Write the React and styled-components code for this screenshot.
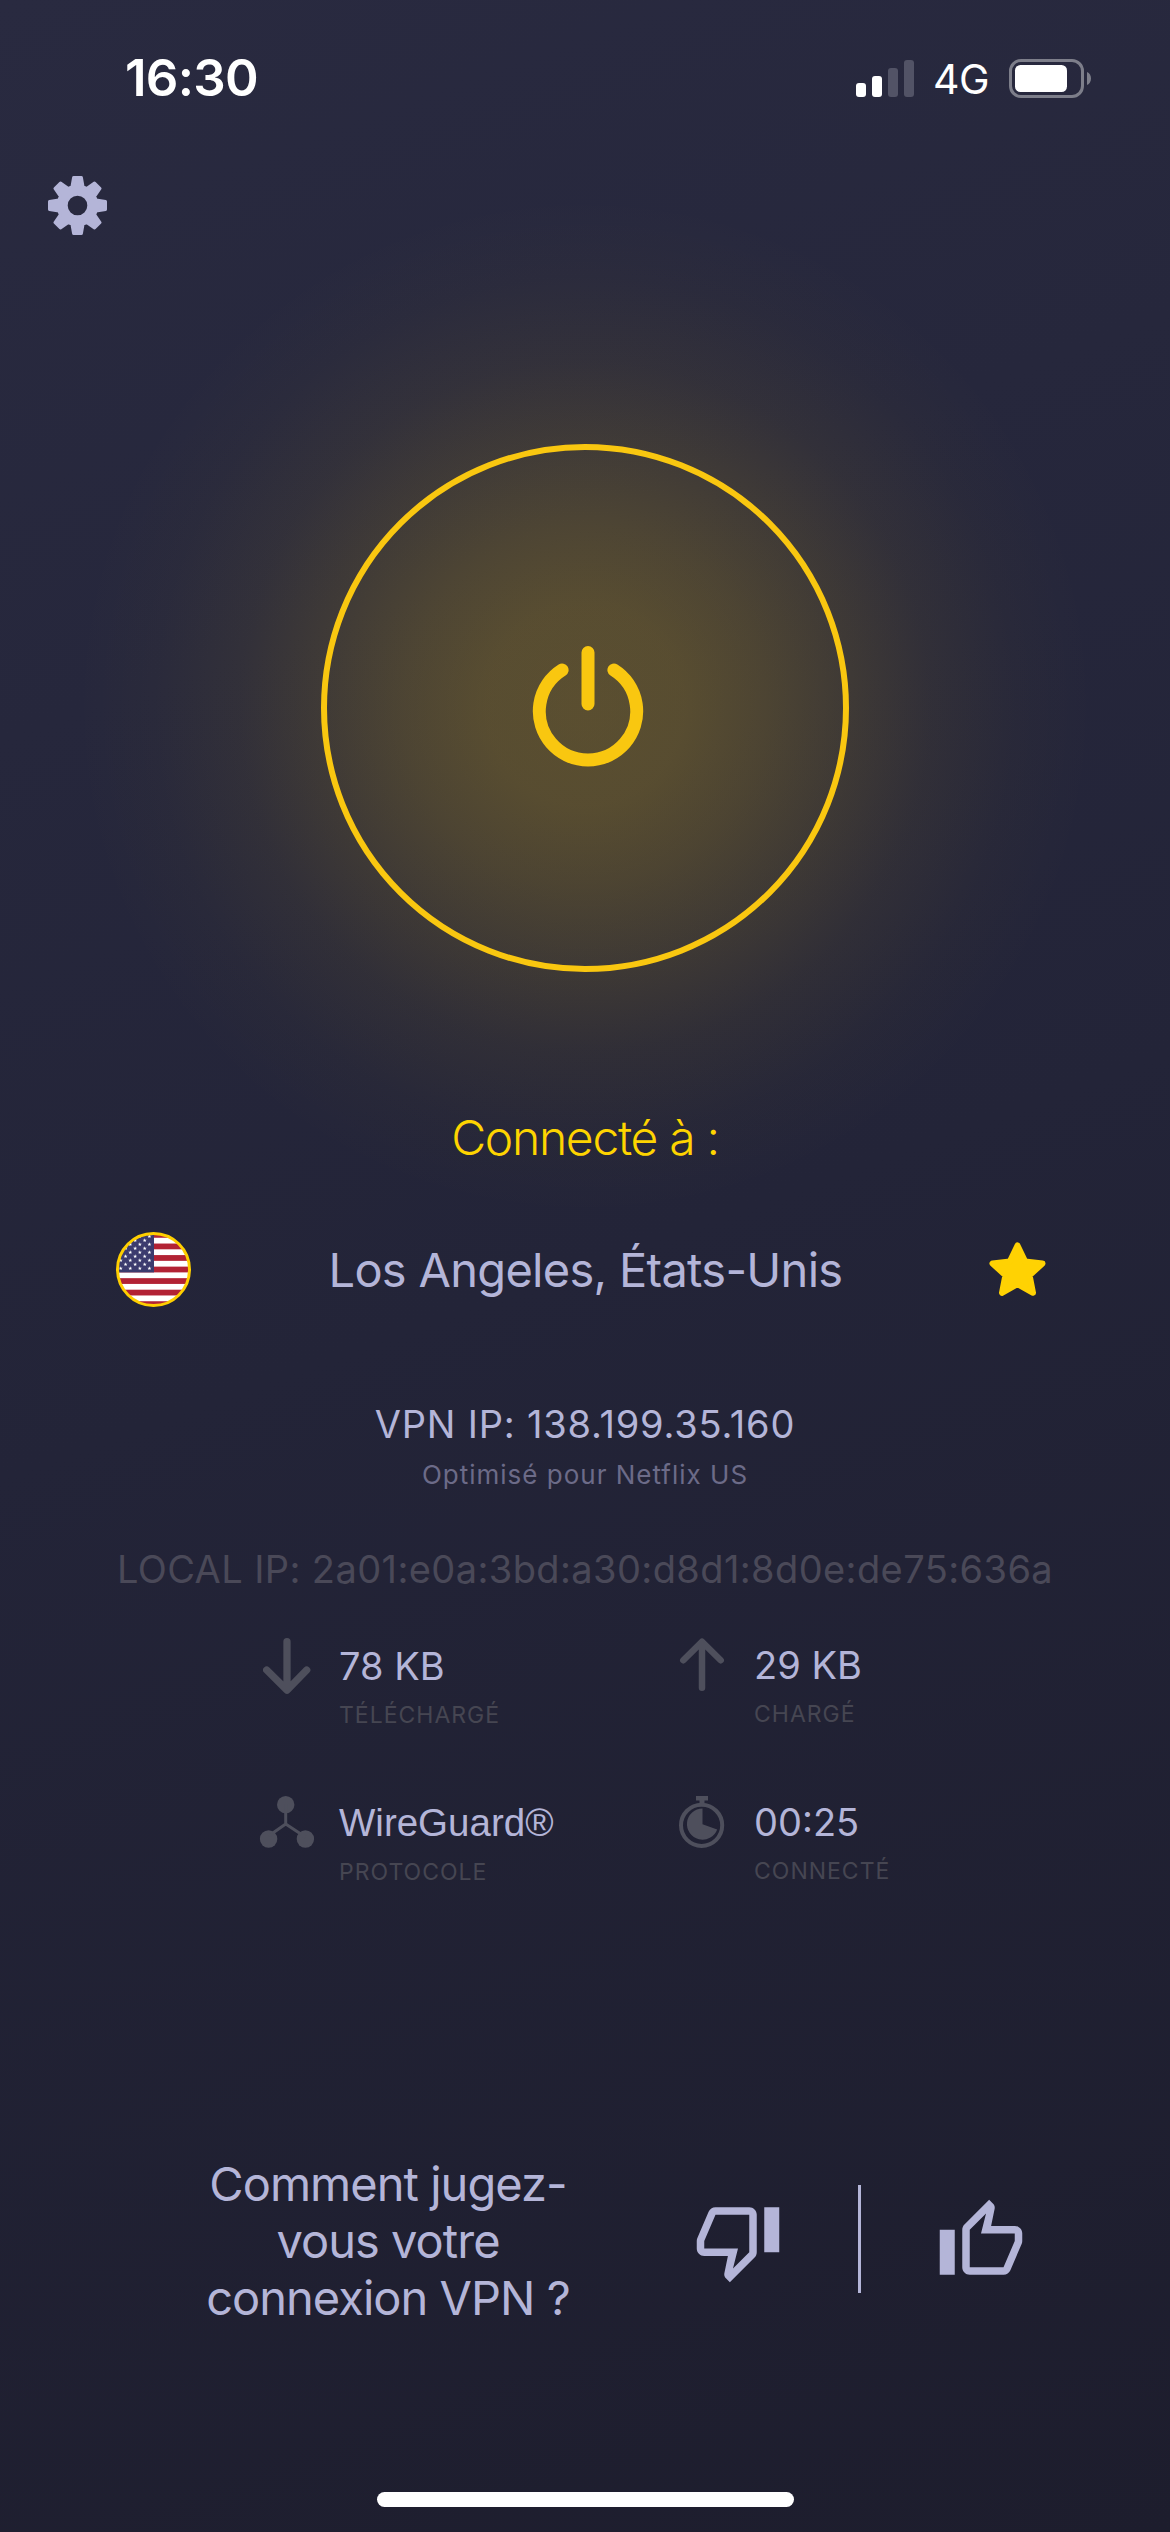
// App.jsx
import React from 'react';
import styled, { createGlobalStyle } from 'styled-components';

const GlobalStyle = createGlobalStyle`
  body {
    margin: 0;
    background: #1d1d2d;
    font-family: Inter, "Liberation Sans", sans-serif;
    -webkit-font-smoothing: antialiased;
  }
`;

const Screen = styled.div`
  display: flex;
  flex-direction: column;
  width: 1170px;
  height: 2532px;
  overflow: hidden;
  box-sizing: border-box;
  color: #b4b5d8;
  background:
    radial-gradient(
      circle at 585px 706px,
      rgba(249, 199, 16, 0.25) 0,
      rgba(249, 199, 16, 0.24) 100px,
      rgba(249, 199, 16, 0.19) 180px,
      rgba(249, 199, 16, 0.12) 264px,
      rgba(249, 199, 16, 0.06) 345px,
      rgba(249, 199, 16, 0.018) 430px,
      rgba(249, 199, 16, 0) 510px
    ),
    linear-gradient(160deg, #292a40 0%, #232438 50%, #1d1d2d 100%);
`;

const StatusBar = styled.div`
  display: flex;
  align-items: center;
  justify-content: space-between;
  height: 156px;
  padding: 0 79px 0 125px;
  color: #fff;
`;

const Time = styled.span`
  font-size: 51px;
  font-weight: 600;
  line-height: 60px;
  letter-spacing: -0.7px;
`;

const StatusIcons = styled.div`
  display: flex;
  align-items: center;
`;

const Network = styled.span`
  width: 95px;
  font-size: 41px;
  line-height: 50px;
  padding-top: 2px;
  padding-left: 19px;
  box-sizing: border-box;
  letter-spacing: -0.5px;
`;

const Signal = styled.div`
  display: flex;
  align-items: flex-end;
  gap: 6px;
  height: 37px;
`;

const SignalBar = styled.span`
  width: 10px;
  height: ${props => props.$height}px;
  border-radius: 3px;
  background: ${props => (props.$active ? '#fff' : '#525366')};
`;

const Header = styled.div`
  display: flex;
  height: 60px;
  padding: 20px 0 0 48px;
`;

const IconButton = styled.button`
  display: flex;
  padding: 0;
  border: none;
  background: none;
  color: inherit;
  cursor: pointer;
`;

const PowerButton = styled(IconButton)`
  align-items: center;
  justify-content: center;
  align-self: center;
  flex-shrink: 0;
  box-sizing: border-box;
  width: 528px;
  height: 528px;
  margin-top: 208px;
  border: 6px solid #f9c710;
  border-radius: 50%;
  color: #f9c710;
`;

const PowerIcon = styled.svg`
  margin: -5px 0 0 5px;
`;

const Status = styled.h1`
  margin: 136px 0 0;
  font-size: 48px;
  font-weight: 300;
  line-height: 60px;
  letter-spacing: -1.3px;
  text-align: center;
  color: #fed400;
`;

const LocationRow = styled.div`
  display: flex;
  align-items: center;
  height: 75px;
  margin-top: 64px;
  padding: 0 115px 0 116px;
`;

const City = styled.span`
  flex: 1;
  font-size: 47px;
  line-height: 60px;
  letter-spacing: -0.7px;
  text-align: center;
  white-space: nowrap;
`;

const Favorite = styled(IconButton)`
  justify-content: center;
  width: 75px;
`;

const AddressBlock = styled.div`
  display: flex;
  flex-direction: column;
  align-items: center;
  margin-top: 92px;
`;

const Address = styled.span`
  font-size: 38px;
  line-height: 50px;
  letter-spacing: 0.8px;
  white-space: nowrap;
`;

const Note = styled.span`
  margin-top: 10px;
  font-size: 26px;
  line-height: 32px;
  letter-spacing: 1px;
  color: #6c6b88;
`;

const LocalAddress = styled(Address)`
  margin-top: 53px;
  letter-spacing: 0.4px;
  color: #4a4958;
`;

const Stats = styled.div`
  display: grid;
  grid-template-columns: 415px 415px;
  grid-auto-rows: 157px;
  margin-top: 44px;
  padding-left: 263px;
`;

const Stat = styled.div`
  display: flex;
  align-items: flex-start;
  color: #4e4f5c;
`;

const StatText = styled.div`
  display: flex;
  flex-direction: column;
  padding: ${props => (props.$raised ? 2 : 3)}px 0 0 28px;
`;

const StatValue = styled.span`
  font-size: 38px;
  line-height: 50px;
  color: #b4b5d8;
`;

const BrandValue = styled(StatValue)`
  font-family: "Liberation Sans", Arial, sans-serif;
  font-size: 38.5px;
`;

const StatLabel = styled.span`
  margin-top: 9px;
  font-size: 23px;
  line-height: 30px;
  letter-spacing: 1px;
  text-transform: uppercase;
  color: #464652;
`;

const Feedback = styled.div`
  display: flex;
  align-items: center;
  height: 171px;
  margin-top: 203px;
  padding-left: 188px;
`;

const Question = styled.p`
  width: 400px;
  margin: 0 105px 0 0;
  font-size: 47px;
  line-height: 57px;
  letter-spacing: -0.97px;
  text-align: center;
`;

const Divider = styled.span`
  width: 3px;
  height: 108px;
  margin: 0 75px;
  background: #b4b5d8;
  transform: translateY(-2px);
`;

const HomeIndicator = styled.div`
  width: 417px;
  height: 15px;
  margin: auto auto 25px;
  border-radius: 8px;
  background: #fff;
`;

const gearPath = () => {
  const points = [];
  for (let i = 0; i < 8; i++) {
    const a = (i * Math.PI) / 4;
    [[-5.6, 18.6], [-3.9, 28], [3.9, 28], [5.6, 18.6]].forEach(([x, r]) => {
      const px = x * Math.cos(a) + r * Math.sin(a);
      const py = x * Math.sin(a) - r * Math.cos(a);
      points.push(`${px.toFixed(2)} ${py.toFixed(2)}`);
    });
  }
  return `M${points.join('L')}ZM11.3 0A11.3 11.3 0 1 0 -11.3 0A11.3 11.3 0 1 0 11.3 0Z`;
};

const Gear = () => (
  <svg width="59" height="59" viewBox="-29.5 -29.5 59 59">
    <path
      d={gearPath()}
      fill="currentColor"
      fillRule="evenodd"
      stroke="currentColor"
      strokeWidth="3"
      strokeLinejoin="round"
    />
  </svg>
);

const Battery = () => (
  <svg width="82" height="39" viewBox="0 0 82 39">
    <rect x="1.5" y="1.5" width="72" height="36" rx="10.5" fill="none" stroke="#7d7e8a" strokeWidth="3" />
    <rect x="6" y="6" width="52" height="27" rx="5.5" fill="#fff" />
    <path d="M78 13c2.6 1 4 3.6 4 6.5s-1.4 5.5-4 6.5z" fill="#7d7e8a" />
  </svg>
);

const Power = () => (
  <PowerIcon width="112" height="122" viewBox="0 0 112 122" fill="none" stroke="currentColor" strokeWidth="13" strokeLinecap="round">
    <path d="M56 7.5V59M30.1 25A48.7 48.7 0 1 0 81.9 25" />
  </PowerIcon>
);

const flagStars = [];
for (let row = 0; row < 9; row++) {
  const start = row % 2 ? 28.7 : 33.4;
  for (let x = start; x > 0; x -= 9.56) {
    flagStars.push([x, 4.4 + row * 4]);
  }
}

const Flag = () => (
  <svg width="75" height="75" viewBox="0 0 75 75">
    <clipPath id="flagClip">
      <circle cx="37.5" cy="37.5" r="36" />
    </clipPath>
    <g clipPath="url(#flagClip)">
      <rect width="75" height="75" fill="#fff" />
      {[0, 1, 2, 3, 4, 5, 6].map(i => (
        <rect key={i} y={i * 11.54} width="75" height="5.77" fill="#b22234" />
      ))}
      <rect width="38" height="40.4" fill="#3c3b6e" />
      {flagStars.map(([x, y]) => (
        <path
          key={`${x}-${y}`}
          transform={`translate(${x} ${y})`}
          d="M0-2.1L.5-.65 2-.65.8.25 1.25 1.7 0 .8-1.25 1.7-.8.25-2-.65-.5-.65Z"
          fill="#fff"
        />
      ))}
    </g>
    <circle cx="37.5" cy="37.5" r="36" fill="none" stroke="#ffcf00" strokeWidth="3" />
  </svg>
);

const Star = () => (
  <svg width="57" height="55" viewBox="0 0 57 55">
    <path
      d="M28.5 3.5L36.2 19.5 53.5 21.5 40.6 33.3 44 50.8 28.5 42.2 13 50.8 16.4 33.3 3.5 21.5 20.8 19.5Z"
      fill="#ffd203"
      stroke="#ffd203"
      strokeWidth="6"
      strokeLinejoin="round"
    />
  </svg>
);

const DownArrow = () => (
  <svg width="48" height="58" viewBox="0 0 48 58" fill="none" stroke="currentColor" strokeWidth="7.3" strokeLinecap="round" strokeLinejoin="round">
    <path d="M24 3.7V51M3.7 32L24 52.2 43.7 32" />
  </svg>
);

const UpArrow = () => (
  <svg width="48" height="58" viewBox="0 0 48 58" fill="none" stroke="currentColor" strokeWidth="6.5" strokeLinecap="round" strokeLinejoin="round">
    <path d="M24 49.7V4M5.3 22.3L24 3.7 42.7 22.3" />
  </svg>
);

const ProtocolIcon = styled.svg`
  overflow: visible;
`;

const Protocol = () => (
  <ProtocolIcon width="48" height="58" viewBox="0 0 48 58" fill="currentColor">
    <circle cx="22.7" cy="9.7" r="8.7" />
    <circle cx="5.6" cy="44" r="8.7" />
    <circle cx="42.4" cy="44" r="8.7" />
    <path d="M22.7 9V29L5.6 41M22.7 29L42.4 42" fill="none" stroke="currentColor" strokeWidth="3" />
  </ProtocolIcon>
);

const Stopwatch = () => (
  <svg width="48" height="58" viewBox="0 0 48 58">
    <circle cx="23.6" cy="30.3" r="20.6" fill="none" stroke="currentColor" strokeWidth="4" />
    <path d="M18 1h12v4.5h-3.500v3h-5v-3H18z" fill="currentColor" />
    <path d="M24.5 13.5V29.2L39.2 34.5A15.6 15.6 0 1 1 24.5 13.5Z" fill="currentColor" />
  </svg>
);

const thumbPath =
  'M9 21h9c.83 0 1.54-.5 1.84-1.22l3.02-7.05c.09-.23.14-.47.14-.73v-2c0-1.1-.9-2-2-2h-6.31l.95-4.57.03-.32c0-.41-.17-.79-.44-1.06L14.17 1 7.58 7.59C7.22 7.95 7 8.45 7 9v10c0 1.1.9 2 2 2zM9 9l4.34-4.34L12 10h9v2l-3 7H9V9zM1 9h4v12H1z';

const Thumb = ({ down }) => (
  <svg width="90" height="90" viewBox="0 0 24 24">
    <path d={thumbPath} fill="currentColor" transform={down ? 'rotate(180 12 12)' : undefined} />
  </svg>
);

const signalBars = [14, 21, 29, 37];

const stats = [
  { icon: DownArrow, value: '78 KB', label: 'Téléchargé' },
  { icon: UpArrow, value: '29 KB', label: 'Chargé', raised: true },
  { icon: Protocol, value: 'WireGuard®', label: 'Protocole', brand: true },
  { icon: Stopwatch, value: '00:25', label: 'Connecté', raised: true },
];

const App = () => (
  <>
    <GlobalStyle />
    <Screen>
      <StatusBar>
        <Time>16:30</Time>
        <StatusIcons>
          <Signal>
            {signalBars.map((height, i) => (
              <SignalBar key={height} $height={height} $active={i < 2} />
            ))}
          </Signal>
          <Network>4G</Network>
          <Battery />
        </StatusIcons>
      </StatusBar>
      <Header>
        <IconButton aria-label="Réglages">
          <Gear />
        </IconButton>
      </Header>
      <PowerButton aria-label="Déconnecter">
        <Power />
      </PowerButton>
      <Status>Connecté à :</Status>
      <LocationRow>
        <Flag />
        <City>Los Angeles, États-Unis</City>
        <Favorite aria-label="Favori">
          <Star />
        </Favorite>
      </LocationRow>
      <AddressBlock>
        <Address>VPN IP: 138.199.35.160</Address>
        <Note>Optimisé pour Netflix US</Note>
        <LocalAddress>LOCAL IP: 2a01:e0a:3bd:a30:d8d1:8d0e:de75:636a</LocalAddress>
      </AddressBlock>
      <Stats>
        {stats.map(({ icon: Icon, value, label, brand, raised }) => (
          <Stat key={label}>
            <Icon />
            <StatText $raised={raised}>
              {brand ? <BrandValue>{value}</BrandValue> : <StatValue>{value}</StatValue>}
              <StatLabel>{label}</StatLabel>
            </StatText>
          </Stat>
        ))}
      </Stats>
      <Feedback>
        <Question>
          Comment jugez-
          <br />
          vous votre
          <br />
          connexion VPN ?
        </Question>
        <IconButton aria-label="Mauvaise">
          <Thumb down />
        </IconButton>
        <Divider />
        <IconButton aria-label="Bonne">
          <Thumb />
        </IconButton>
      </Feedback>
      <HomeIndicator />
    </Screen>
  </>
);

export default App;
